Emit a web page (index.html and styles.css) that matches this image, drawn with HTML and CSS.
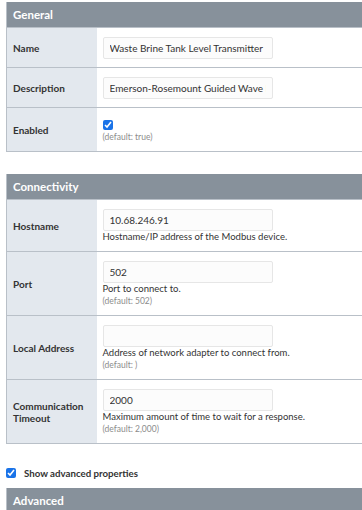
FILE: index.html
```html
<!DOCTYPE html>
<html>
  <head>
    <meta charset="utf-8" />
    <title>Device Settings</title>
    <link rel="stylesheet" href="styles.css">
  </head>
  <body>
    <table class="props">
      <colgroup><col class="name-col" /><col /></colgroup>
      <tr><th colspan="2" class="section">General</th></tr>
      <tr>
        <td class="name">Name</td>
        <td class="value"><input type="text" value="Waste Brine Tank Level Transmitter" /></td>
      </tr>
      <tr>
        <td class="name">Description</td>
        <td class="value"><input type="text" value="Emerson-Rosemount Guided Wave Radar" /></td>
      </tr>
      <tr>
        <td class="name">Enabled</td>
        <td class="value">
          <input type="checkbox" class="check" checked />
          <div class="default">(default: true)</div>
        </td>
      </tr>
    </table>

    <table class="props">
      <colgroup><col class="name-col" /><col /></colgroup>
      <tr><th colspan="2" class="section">Connectivity</th></tr>
      <tr>
        <td class="name">Hostname</td>
        <td class="value">
          <input type="text" value="10.68.246.91" />
          <div class="help">Hostname/IP address of the Modbus device.</div>
        </td>
      </tr>
      <tr>
        <td class="name">Port</td>
        <td class="value">
          <input type="text" value="502" />
          <div class="help">Port to connect to.</div>
          <div class="default">(default: 502)</div>
        </td>
      </tr>
      <tr>
        <td class="name">Local Address</td>
        <td class="value">
          <input type="text" value="" />
          <div class="help">Address of network adapter to connect from.</div>
          <div class="default">(default: )</div>
        </td>
      </tr>
      <tr>
        <td class="name">Communication Timeout</td>
        <td class="value">
          <input type="text" value="2000" />
          <div class="help">Maximum amount of time to wait for a response.</div>
          <div class="default">(default: 2,000)</div>
        </td>
      </tr>
    </table>

    <div class="advanced">
      <input type="checkbox" class="check" checked />
      <label>Show advanced properties</label>
    </div>

    <table class="props">
      <colgroup><col class="name-col" /><col /></colgroup>
      <tr><th colspan="2" class="section">Advanced</th></tr>
    </table>
  </body>
</html>
```

FILE: styles.css
```css
body {
  margin: 0;
  padding: 2px 0 0 6px;
  font-family: Lato, "Open Sans", Arial, sans-serif;
  color: #333;
  overflow: hidden;
  width: 420px;
  height: 510px;
}

.props {
  width: 400px;
  table-layout: fixed;
  border-collapse: collapse;
  border-left: 1px solid #b9c0c8;
  border-bottom: 1px solid #b9c0c8;
  margin-bottom: 22px;
}

.name-col {
  width: 90px;
}

.section {
  background-color: #87919b;
  color: white;
  text-align: left;
  font-size: 11.5px;
  font-weight: bold;
  height: 25px;
  padding: 0 0 0 6px;
}

.props td {
  border-top: 1px solid #b9c0c8;
  vertical-align: middle;
  line-height: 12px;
}

.name {
  background-color: #e3e8ee;
  font-size: 10px;
  font-weight: bold;
  line-height: 13px;
  padding: 0 4px 0 6px;
}

.value {
  padding: 9px 6px 8px 6px;
}

input[type="text"] {
  display: block;
  width: 170px;
  height: 22px;
  box-sizing: border-box;
  border: 1px solid #e6e6e6;
  background-color: #fcfcfc;
  border-radius: 2px;
  font-family: Lato, "Open Sans", Arial, sans-serif;
  font-size: 10px;
  color: #333;
  padding: 0 6px;
  margin: 0;
}

.check {
  display: block;
  margin: 0;
  width: 10px;
  height: 10px;
  accent-color: #1a73e8;
}

.value .check {
  margin: 3px 0 1px 0;
}

.help {
  font-size: 9.5px;
  line-height: 12px;
}

.default {
  font-size: 8.5px;
  line-height: 12px;
  color: #8c8c8c;
}

.advanced {
  display: flex;
  align-items: center;
  gap: 8px;
  height: 14px;
  margin: 8px 0 8px 0;
  font-size: 9.7px;
  font-weight: bold;
}
```
